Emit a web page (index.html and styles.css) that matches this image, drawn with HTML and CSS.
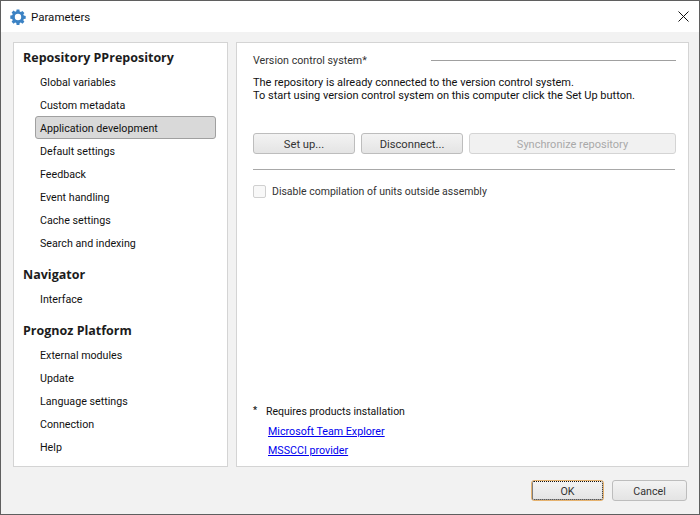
FILE: index.html
```html
<!DOCTYPE html>
<html lang="en">
<head>
<meta charset="utf-8">
<title>Parameters</title>
<link rel="stylesheet" href="styles.css">
</head>
<body>
<div class="window">
  <header class="titlebar">
    <svg class="app-icon" width="16" height="16" viewBox="0 0 16 16"><path fill="#3b82c4" fill-rule="evenodd" d="M6.600 .6h2.800l.3 1.900 1.200.5 1.500-1.100 2 2-1.100 1.500.5 1.200 1.900.3v2.800l-1.900.3-.5 1.200 1.100 1.500-2 2-1.500-1.100-1.200.5-.3 1.900H6.600l-.3-1.900-1.200-.5-1.500 1.100-2-2 1.100-1.500-.5-1.200-1.900-.3V6.600l1.900-.3.5-1.200-1.100-1.500 2-2 1.500 1.100 1.200-.5zM8 4.800a3.200 3.200 0 1 0 0 6.400 3.200 3.200 0 0 0 0-6.400z"/></svg>
    <span class="title">Parameters</span>
    <svg class="close" width="11" height="11" viewBox="0 0 11 11"><path d="M.5.5l10 10M10.500.5l-10 10" stroke="#111" stroke-width="1" fill="none"/></svg>
  </header>
  <main class="content">
    <nav class="panel nav">
      <h2 class="nav-head">Repository PPrepository</h2>
      <ul class="nav-list">
        <li>Global variables</li>
        <li>Custom metadata</li>
        <li class="selected">Application development</li>
        <li>Default settings</li>
        <li>Feedback</li>
        <li>Event handling</li>
        <li>Cache settings</li>
        <li>Search and indexing</li>
      </ul>
      <h2 class="nav-head">Navigator</h2>
      <ul class="nav-list">
        <li>Interface</li>
      </ul>
      <h2 class="nav-head">Prognoz Platform</h2>
      <ul class="nav-list">
        <li>External modules</li>
        <li>Update</li>
        <li>Language settings</li>
        <li>Connection</li>
        <li>Help</li>
      </ul>
    </nav>
    <section class="panel pane">
      <div class="group-title"><span class="group-label">Version control system*</span><span class="group-line"></span></div>
      <p class="desc">The repository is already connected to the version control system.<br>To start using version control system on this computer click the Set Up button.</p>
      <div class="actions">
        <button class="btn act">Set up...</button>
        <button class="btn act">Disconnect...</button>
        <button class="btn sync" disabled>Synchronize repository</button>
      </div>
      <div class="rule"></div>
      <label class="check"><span class="box"></span><span>Disable compilation of units outside assembly</span></label>
      <div class="foot">
        <div class="note"><span class="star">*</span><span>Requires products installation</span></div>
        <a class="link" href="#">Microsoft Team Explorer</a>
        <a class="link" href="#">MSSCCI provider</a>
      </div>
    </section>
  </main>
  <footer class="dialog-actions">
    <button class="btn dlg default">OK</button>
    <button class="btn dlg">Cancel</button>
  </footer>
</div>
</body>
</html>
```

FILE: styles.css
```css
* { box-sizing: border-box; }
html, body { margin: 0; padding: 0; }
body { width: 700px; height: 515px; overflow: hidden; font-family: Roboto, "Open Sans", sans-serif; font-size: 10.7px; color: #111; }
.window { width: 700px; height: 515px; border: 1px solid #5f5f5f; background: #f2f2f2; display: flex; flex-direction: column; }
.titlebar { height: 31px; background: #fff; display: flex; align-items: center; padding: 0 10px 0 9px; flex: none; }
.app-icon { flex: none; margin-right: 5px; }
.title { flex: 1; color: #111; font-size: 11.5px; }
.close { flex: none; }
.content { flex: none; height: 425px; margin: 10px 12px 0 12px; display: flex; gap: 8px; }
.panel { background: #fff; border: 1px solid #d4d4d4; }
.nav { width: 215px; flex: none; padding: 4px 0 0 9px; }
.nav-head { margin: 0; height: 23px; line-height: 22px; font-family: "Open Sans", sans-serif; font-size: 12.5px; font-weight: 700; color: #1c1c1c; }
.nav-list { list-style: none; margin: 0 0 10px; padding: 0 0 0 12px; }
.nav-list li { height: 23px; line-height: 23px; width: 181px; padding-left: 4px; border: 1px solid transparent; border-radius: 3px; white-space: nowrap; }
.nav-list .selected { background: #d9d9d9; border-color: #a0a0a0; }
.pane { flex: 1; padding: 9px 12px 6px 16px; display: flex; flex-direction: column; }
.group-title { display: flex; align-items: center; height: 16px; }
.group-label { width: 178px; flex: none; color: #333; }
.group-line { flex: 1; height: 1px; background: #a0a0a0; }
.desc { margin: 8px 0 0; line-height: 13px; color: #111; height: 26px; font-size: 11px; }
.actions { display: flex; gap: 6px; margin-top: 31px; width: 423px; }
.btn { height: 21px; padding: 1px 0 0; font: inherit; color: #333; border: 1px solid #bdbdbd; border-radius: 3px; background: linear-gradient(#f3f3f3, #e4e4e4); }
.act { width: 102px; flex: none; font-size: 11.2px; }
.sync { flex: 1; color: #a9a9a9; border-color: #d4d4d4; background: #f1f1f1; font-size: 11px; }
.rule { height: 1px; background: #a8a8a8; margin-top: 15px; width: 422px; }
.check { display: flex; align-items: center; gap: 6px; margin-top: 15px; height: 13px; color: #333; font-size: 10.5px; }
.box { width: 13px; height: 13px; border: 1px solid #d0d0d0; border-radius: 2px; background: #f8f8f8; flex: none; }
.foot { margin-top: auto; display: flex; flex-direction: column; }
.note { display: flex; height: 21px; align-items: center; color: #111; font-size: 10.5px; }
.star { width: 13px; flex: none; transform: translateY(-2px); font-weight: 700; font-size: 9px; }
.link { display: block; color: #0000ee; height: 19px; line-height: 19px; margin-left: 15px; text-decoration: underline; }
.dialog-actions { flex: 1; display: flex; justify-content: flex-end; gap: 8px; padding: 13px 12px 0 0; }
.dlg { width: 73px; font-size: 10.7px; }
.dlg + .dlg { width: 75px; }
.default { outline: 1px dotted #111; outline-offset: -2px; border-color: #e5b26f; }
```
